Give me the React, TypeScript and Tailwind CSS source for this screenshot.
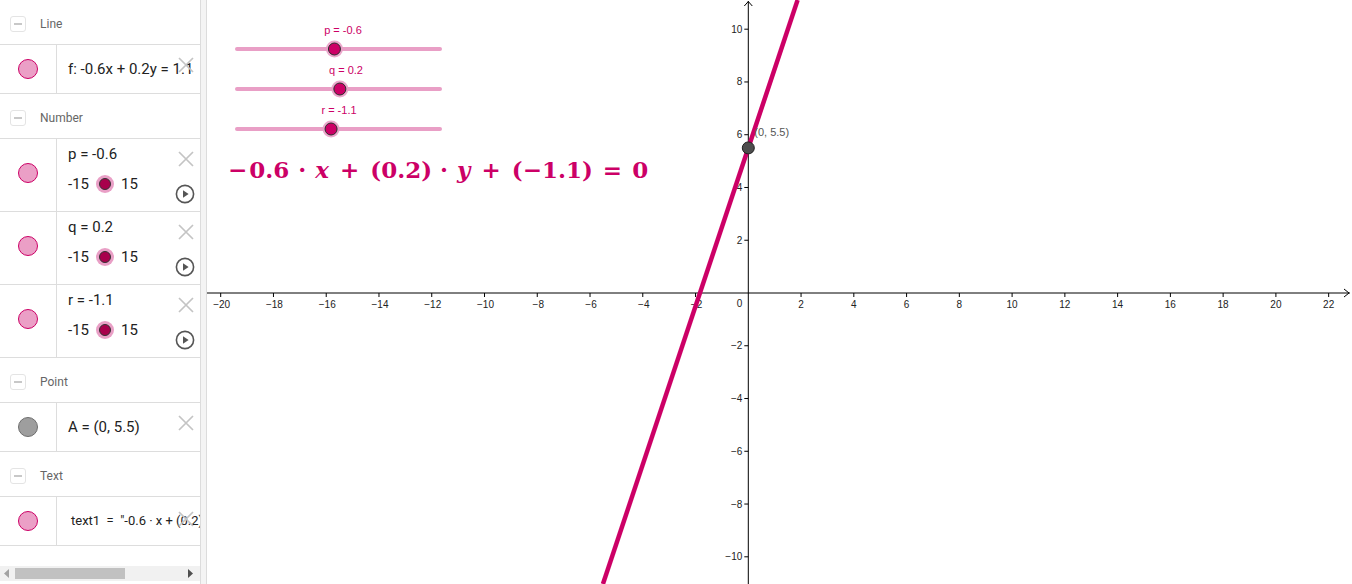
import React from 'react'

const PINK = '#cc0066'
const SOFT = '#e99fc6'

// graphics view geometry (canvas coords, canvas starts at x=207)
const OX = 541.3
const OY = 293
const S = 26.38
const W = 1145
const H = 584

const fmt = (n: number) => (n < 0 ? `\u2212${-n}` : `${n}`)

function MinusBox() {
  return (
    <span className="flex h-4 w-4 items-center justify-center rounded-[3px] border border-[#e4e4e4] bg-white">
      <span className="h-[2px] w-[8px] bg-[#c8c8c8]" />
    </span>
  )
}

function Header({ label }: { label: string }) {
  return (
    <div className="flex h-[45px] shrink-0 items-center gap-[14px] border-b border-[#dddddd] pl-[10px] pt-[3px]">
      <MinusBox />
      <span className="text-[12px] text-[#666666]">{label}</span>
    </div>
  )
}

function Dot({ gray }: { gray?: boolean }) {
  return gray ? (
    <span className="h-5 w-5 rounded-full border border-[#6e6e6e] bg-[#9e9e9e]" />
  ) : (
    <span className="h-5 w-5 rounded-full border border-[#cc0066] bg-[#eb9fc6]" />
  )
}

function Cross({ top }: { top: number }) {
  return (
    <svg className="absolute right-[6px]" style={{ top }} width="16" height="16" viewBox="0 0 16 16">
      <path d="M1 1 L15 15 M15 1 L1 15" stroke="#c4c4c4" strokeWidth="1.7" fill="none" />
    </svg>
  )
}

function Play() {
  return (
    <svg className="absolute right-[5px] top-[45px]" width="20" height="20" viewBox="0 0 20 20">
      <circle cx="10" cy="10" r="8.6" stroke="#555555" strokeWidth="1.6" fill="none" />
      <polygon points="8,6.3 8,13.7 13.6,10" fill="#555555" />
    </svg>
  )
}

function ItemRow({ gray, children, crossTop = 12 }: { gray?: boolean; children: React.ReactNode; crossTop?: number }) {
  return (
    <div className="flex h-[49px] shrink-0 border-b border-[#dddddd]">
      <div className="flex w-[57px] shrink-0 items-center justify-center border-r border-[#dddddd] pr-[1px]">
        <Dot gray={gray} />
      </div>
      <div className="relative flex min-w-0 flex-1 items-center overflow-hidden whitespace-nowrap pl-[11px]">
        {children}
        <Cross top={crossTop} />
      </div>
    </div>
  )
}

function SliderRow({ label }: { label: string }) {
  return (
    <div className="flex h-[73px] shrink-0 border-b border-[#dddddd]">
      <div className="flex w-[57px] shrink-0 justify-center border-r border-[#dddddd] pr-[1px] pt-[24px]">
        <Dot />
      </div>
      <div className="relative flex min-w-0 flex-1 flex-col gap-[10px] overflow-hidden whitespace-nowrap pl-[11px] pt-[5px] text-[15px] leading-[20px] text-[#222222]">
        <span>{label}</span>
        <div className="flex items-center gap-[7px]">
          <span>-15</span>
          <span className="flex h-[18px] w-[18px] items-center justify-center rounded-full bg-[#e99fc6]">
            <span className="h-[12px] w-[12px] rounded-full border border-[#333333] bg-[#a8004c]" />
          </span>
          <span>15</span>
        </div>
        <Cross top={12} />
        <Play />
      </div>
    </div>
  )
}

function AlgebraPanel() {
  return (
    <div className="flex h-full w-[200px] shrink-0 flex-col bg-white font-['Roboto',sans-serif]">
      <Header label="Line" />
      <ItemRow>
        <span className="text-[15px] text-[#222222]">f: -0.6x + 0.2y = 1.1</span>
      </ItemRow>
      <Header label="Number" />
      <SliderRow label="p = -0.6" />
      <SliderRow label="q = 0.2" />
      <SliderRow label="r = -1.1" />
      <Header label="Point" />
      <ItemRow gray>
        <span className="text-[15px] text-[#222222]">A&nbsp;=&nbsp;(0,&nbsp;5.5)</span>
      </ItemRow>
      <Header label="Text" />
      <ItemRow crossTop={14}>
        <span className="pl-[3px] text-[13px] text-[#222222]">text1&nbsp;&nbsp;=&nbsp;&nbsp;"-0.6 · x + (0.2)</span>
      </ItemRow>
      <div className="flex-1" />
      <div className="mb-[3px] flex h-[15px] shrink-0 items-center bg-[#f1f1f1]">
        <svg className="ml-[4px]" width="6" height="9" viewBox="0 0 6 9">
          <polygon points="5,0 5,9 0,4.5" fill="#a3a3a3" />
        </svg>
        <span className="ml-[5px] h-[11px] w-[110px] bg-[#c1c1c1]" />
        <span className="flex-1" />
        <svg className="mr-[6px]" width="6" height="9" viewBox="0 0 6 9">
          <polygon points="0,0 0,9 5,4.5" fill="#505050" />
        </svg>
      </div>
    </div>
  )
}

function Slider({ y, value, label, labelX }: { y: number; value: number; label: string; labelX: number }) {
  const x0 = 30
  const x1 = 233
  const kx = x0 + ((value + 15) / 30) * (x1 - x0)
  return (
    <g>
      <text x={labelX} y={y - 15} textAnchor="middle" fontSize="11" fill={PINK} fontFamily="Liberation Sans, Arial, sans-serif">
        {label}
      </text>
      <line x1={x0} y1={y} x2={x1} y2={y} stroke={SOFT} strokeWidth="4" strokeLinecap="round" />
      <circle cx={kx} cy={y} r="8.5" fill={SOFT} opacity="0.9" />
      <circle cx={kx} cy={y} r="6" fill={PINK} stroke="#2b2b2b" strokeWidth="1" />
    </g>
  )
}

function Graphics() {
  const xs: number[] = []
  for (let n = -20; n <= 22; n += 2) if (n !== 0) xs.push(n)
  const ys: number[] = []
  for (let n = -10; n <= 10; n += 2) if (n !== 0) ys.push(n)

  // line y = 3x + 5.5
  const yTop = OY / S
  const yBot = -(H - OY) / S
  const lx1 = OX + ((yTop - 5.5) / 3) * S
  const lx2 = OX + ((yBot - 5.5) / 3) * S
  const ay = OY - 5.5 * S

  return (
    <div className="relative h-full flex-1 overflow-hidden bg-white">
      <svg width={W} height={H} className="block">
        <g fontFamily="Liberation Sans, Arial, sans-serif" fontSize="10" fill="#222222">
          <line x1="0" y1={OY} x2={W - 2} y2={OY} stroke="#000" strokeWidth="1" />
          <polyline points={`${W - 8},${OY - 4} ${W - 3},${OY} ${W - 8},${OY + 4}`} fill="none" stroke="#000" strokeWidth="1" />
          <line x1={OX} y1="1" x2={OX} y2={H} stroke="#000" strokeWidth="1" />
          <polyline points={`${OX - 4},6 ${OX},1.5 ${OX + 4},6`} fill="none" stroke="#000" strokeWidth="1" />
          {xs.map((n) => {
            const px = OX + n * S
            return (
              <g key={`x${n}`}>
                <line x1={px} y1={OY} x2={px} y2={OY + 4} stroke="#000" strokeWidth="1" />
                <text x={px + (n < 0 ? 1 : 0)} y={OY + 15} textAnchor="middle">
                  {fmt(n)}
                </text>
              </g>
            )
          })}
          {ys.map((n) => {
            const py = OY - n * S
            return (
              <g key={`y${n}`}>
                <line x1={OX - 4} y1={py} x2={OX} y2={py} stroke="#000" strokeWidth="1" />
                <text x={OX - 6} y={py + 3.5} textAnchor="end">
                  {fmt(n)}
                </text>
              </g>
            )
          })}
          <text x={OX - 6} y={OY + 14} textAnchor="end">
            0
          </text>
        </g>

        <line x1={lx1} y1="0" x2={lx2} y2={H} stroke={PINK} strokeWidth="4.5" />

        <circle cx={OX} cy={ay} r="6" fill="#4d4d4d" stroke="#1f1f1f" strokeWidth="1" />
        <text x={OX + 6} y={ay - 12} fontSize="11" fill="#555555" fontFamily="Liberation Sans, Arial, sans-serif">
          (0, 5.5)
        </text>

        <Slider y={49} value={-0.6} label="p = -0.6" labelX={136} />
        <Slider y={89} value={0.2} label="q = 0.2" labelX={139} />
        <Slider y={129} value={-1.1} label="r = -1.1" labelX={132} />
      </svg>

      <div className="absolute left-[21px] top-[158px] flex items-baseline whitespace-nowrap font-['DejaVu_Serif',serif] text-[23px] font-bold leading-none text-[#cc0066]">
        <span>{'\u2212'}</span>
        <span className="ml-[2px]">0.6</span>
        <span className="ml-[9px]">·</span>
        <span className="ml-[9px] italic">x</span>
        <span className="ml-[11px]">+</span>
        <span className="ml-[11px]">(0.2)</span>
        <span className="ml-[8px]">·</span>
        <span className="ml-[9px] italic">y</span>
        <span className="ml-[11px]">+</span>
        <span className="ml-[11px]">({'\u2212'}1.1)</span>
        <span className="ml-[10px]">=</span>
        <span className="ml-[10px]">0</span>
      </div>
    </div>
  )
}

export default function App() {
  return (
    <div className="flex h-[584px] w-[1352px] overflow-hidden bg-white">
      <AlgebraPanel />
      <div className="h-full w-[7px] shrink-0 border-l border-r border-[#dcdcdc] bg-[#f4f4f4]" />
      <Graphics />
    </div>
  )
}
